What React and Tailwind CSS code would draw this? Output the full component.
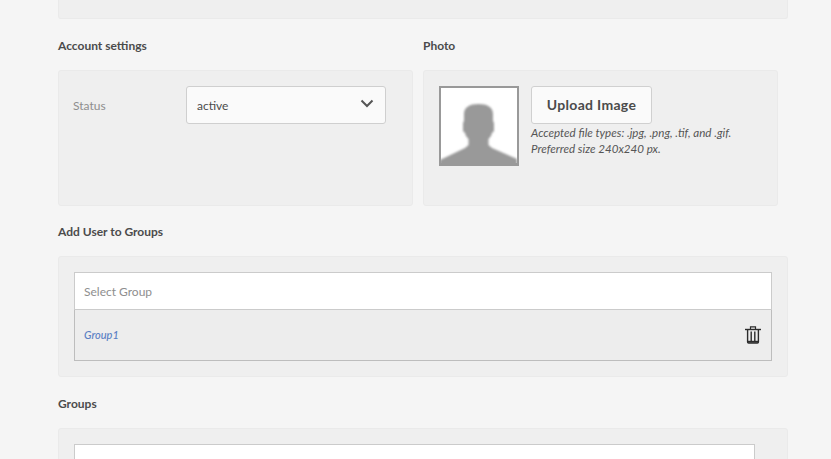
export default function App() {
  const Heading = ({ children, className }) => (
    <h3 className={`text-[12px] leading-[18px] font-bold text-[#4b4b4b] ${className}`}>{children}</h3>
  );
  const panel = "rounded-[3px] border border-[#eaeaea] bg-[#efefef]";
  return (
    <div className="h-[459px] w-[831px] overflow-hidden bg-[#f5f5f5] pl-[58px] font-['Lato',sans-serif]">
      <div className="w-[730px]">
        <div className="h-[19px] rounded-b-[3px] border border-t-0 border-[#eaeaea] bg-[#efefef]" />

        <div className="flex h-[51px] gap-[10px] pt-[18px]">
          <Heading className="w-[355px]">Account settings</Heading>
          <Heading className="w-[355px]">Photo</Heading>
        </div>

        <div className="flex h-[136px] gap-[10px]">
          <div className={`flex w-[355px] items-start pt-[15px] pl-[14px] ${panel}`}>
            <span className="w-[113px] pt-[11px] text-[12px] leading-[18px] text-[#8e8e8e]">Status</span>
            <div className="flex h-[38px] w-[200px] items-center justify-between rounded-[3px] border border-[#cfcfcf] bg-[#fafafa] pr-[11px] pl-[10px]">
              <span className="pt-[2px] text-[12px] text-[#4b4b4b]">active</span>
              <svg width="14" height="9" viewBox="0 0 14 9" className="-mt-[3px]" fill="none">
                <path d="M1.5 1.5 7 7l5.5-5.5" stroke="#555" strokeWidth="2" />
              </svg>
            </div>
          </div>

          <div className={`flex w-[355px] items-start gap-[12px] pt-[15px] pl-[15px] ${panel}`}>
            <svg width="80" height="80" viewBox="0 0 80 80" className="shrink-0">
              <defs>
                <filter id="soft" x="-10%" y="-10%" width="120%" height="120%">
                  <feGaussianBlur stdDeviation="0.8" />
                </filter>
              </defs>
              <rect width="80" height="80" fill="#999" />
              <rect x="2" y="2" width="76" height="76" fill="#fff" />
              <path
                d="M39.5 18C48 18 54 21 54 28V35L55 37V45L53 47L52 50L49.5 53V59L53 62L78 73V80H1V74L26 62L29.5 59V53L27 50L26 47L24 45V37L25 35V28C25 21 31 18 39.5 18Z"
                fill="#999"
                filter="url(#soft)"
              />
              <rect y="77" width="80" height="3" fill="#999" />
            </svg>
            <div>
              <button className="h-[38px] w-[121px] rounded-[3px] border border-[#d0d0d0] bg-[#fafafa] pb-[2px] text-[14px] font-bold tracking-[0.3px] text-[#4b4b4b]">
                Upload Image
              </button>
              <p className="mt-[1px] text-[11.6px] leading-[16px] text-[#555] italic">
                Accepted file types: .jpg, .png, .tif, and .gif.
                <br />
                Preferred size 240x240 px.
              </p>
            </div>
          </div>
        </div>

        <div className="h-[50px] pt-[17px]">
          <Heading>Add User to Groups</Heading>
        </div>

        <div className={`h-[121px] p-[15px] ${panel}`}>
          <div className="flex h-[38px] items-center border border-[#cbcbcb] bg-white pt-[2px] pl-[9px] text-[12px] text-[#8e8e8e]">
            Select Group
          </div>
          <div className="flex h-[51px] items-center justify-between border border-t-0 border-[#bdbdbd] bg-[#ededed] pr-[10px] pl-[9px]">
            <span className="text-[11px] font-medium text-[#5a7fc4] italic">Group1</span>
            <svg width="16" height="18" viewBox="0 0 16 18" fill="none" stroke="#2c2c2c">
              <path d="M0 3.5h16" strokeWidth="1.4" />
              <path d="M5.5 3V.8h5V3" strokeWidth="1.2" />
              <path d="M2.6 3.5v12.6c0 .6.4 1 1 1h8.8c.6 0 1-.4 1-1V3.5" strokeWidth="1.4" />
              <path d="M2.6 15.8h10.8" strokeWidth="2" />
              <path d="M6.2 5.5v9.5M9.8 5.5v9.5" strokeWidth="1.4" />
            </svg>
          </div>
        </div>

        <div className="h-[51px] pt-[18px]">
          <Heading>Groups</Heading>
        </div>

        <div className={`h-[80px] pt-[15px] pl-[15px] ${panel}`}>
          <div className="h-[60px] w-[681px] border border-[#cbcbcb] bg-white" />
        </div>
      </div>
    </div>
  );
}
